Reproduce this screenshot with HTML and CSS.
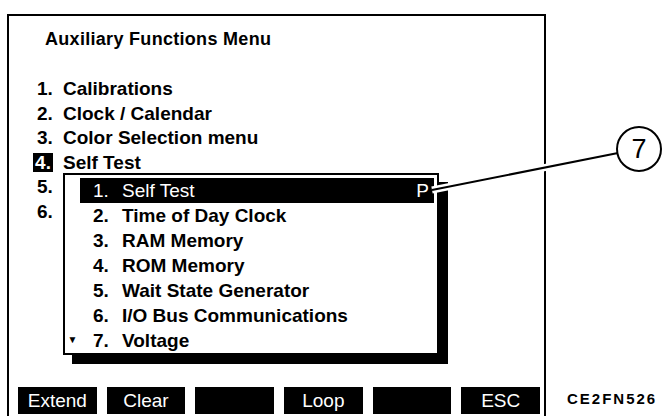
FILE: index.html
```html
<!DOCTYPE html>
<html lang="en">
<head>
    <meta charset="UTF-8">
    <meta name="viewport" content="width=device-width, initial-scale=1.0">
    <title>Auxiliary Functions Menu</title>
    <link rel="stylesheet" href="styles.css">
</head>
<body>
<div class="page">

    <!-- Tela do instrumento -->
    <div class="screen">
        <h1 class="title">Auxiliary Functions Menu</h1>

        <div class="menu">
            <div class="row"><span class="num">1.</span><span>Calibrations</span></div>
            <div class="row"><span class="num">2.</span><span>Clock / Calendar</span></div>
            <div class="row"><span class="num">3.</span><span>Color Selection menu</span></div>
            <div class="row"><span class="num sel">4.</span><span>Self Test</span></div>
            <div class="row"><span class="num">5.</span></div>
            <div class="row"><span class="num">6.</span></div>
        </div>

        <!-- Submenu Self Test -->
        <div class="popup">
            <div class="prow"><span class="gut"></span><span class="cell active"><span class="pnum">1.</span><span>Self Test</span><span class="flag">P</span></span></div>
            <div class="prow"><span class="gut"></span><span class="cell"><span class="pnum">2.</span><span>Time of Day Clock</span></span></div>
            <div class="prow"><span class="gut"></span><span class="cell"><span class="pnum">3.</span><span>RAM Memory</span></span></div>
            <div class="prow"><span class="gut"></span><span class="cell"><span class="pnum">4.</span><span>ROM Memory</span></span></div>
            <div class="prow"><span class="gut"></span><span class="cell"><span class="pnum">5.</span><span>Wait State Generator</span></span></div>
            <div class="prow"><span class="gut"></span><span class="cell"><span class="pnum">6.</span><span>I/O Bus Communications</span></span></div>
            <div class="prow"><span class="gut">&#9660;</span><span class="cell"><span class="pnum">7.</span><span>Voltage</span></span></div>
        </div>

        <!-- Teclas de função -->
        <div class="softkeys">
            <div class="key">Extend</div>
            <div class="key">Clear</div>
            <div class="key"></div>
            <div class="key">Loop</div>
            <div class="key"></div>
            <div class="key">ESC</div>
        </div>
    </div>

    <div class="figid">CE2FN526</div>

    <!-- Chamada 7 -->
    <svg class="callout" width="662" height="416" viewBox="0 0 662 416">
        <line x1="432" y1="190" x2="618" y2="153" stroke="#fff" stroke-width="7"/>
        <line x1="432" y1="190" x2="618" y2="153" stroke="#000" stroke-width="2"/>
        <circle cx="639" cy="149" r="22" fill="#fff" stroke="#000" stroke-width="2"/>
        <text x="639" y="158" text-anchor="middle" class="callnum">7</text>
    </svg>
</div>
</body>
</html>
```

FILE: styles.css
```css
/* Página */
body {
    margin: 0;
    background-color: #fff;
    font-family: "Liberation Sans", Arial, sans-serif;
    color: #000;
    overflow: hidden;
}

.page {
    position: relative;
    width: 662px;
    height: 416px;
    display: flex;
    align-items: flex-start;
    padding: 14px 0 0 7px;
    box-sizing: border-box;
}

/* Moldura da tela */
.screen {
    position: relative;
    width: 539px;
    height: 402px;
    border: 2px solid #000;
    border-bottom: none;
    box-sizing: border-box;
    display: flex;
    flex-direction: column;
}

.title {
    margin: 13px 0 0 36px;
    font-size: 18px;
    line-height: 20px;
    font-weight: bold;
    letter-spacing: 0.3px;
}

/* Menu principal */
.menu {
    margin: 28px 0 0 28px;
    font-size: 19px;
    font-weight: bold;
}

.row {
    display: flex;
    align-items: center;
    height: 24.5px;
}

.num {
    width: 26px;
}

.num.sel {
    width: 20px;
    height: 19px;
    line-height: 19px;
    margin: 0 10px 0 -4px;
    background-color: #000;
    color: #fff;
    text-align: center;
}

/* Submenu */
.popup {
    position: absolute;
    left: 54px;
    top: 157px;
    width: 372px;
    padding-top: 3px;
    border: 2px solid #000;
    background-color: #fff;
    box-shadow: 9px 9px 0 #000;
    font-size: 19px;
    font-weight: bold;
}

.prow {
    display: flex;
    height: 25px;
}

.gut {
    width: 15px;
    font-size: 10px;
    line-height: 23px;
    text-align: center;
}

.cell {
    flex: 1;
    display: flex;
    align-items: center;
    margin-right: 3px;
    padding: 0 5px 0 13px;
}

.pnum {
    width: 29px;
}

.cell.active {
    background-color: #000;
    color: #fff;
    font-weight: normal;
}

.flag {
    margin-left: auto;
}

/* Teclas */
.softkeys {
    margin-top: auto;
    margin-bottom: 2px;
    display: flex;
    gap: 10px;
    padding: 0 4px 0 9px;
}

.key {
    flex: 1;
    height: 27px;
    line-height: 27px;
    background-color: #000;
    color: #fff;
    font-size: 19px;
    text-align: center;
}

.figid {
    margin: 376px 0 0 21px;
    font-size: 15px;
    font-weight: bold;
    letter-spacing: 2px;
    line-height: 17px;
}

.callout {
    position: absolute;
    left: 0;
    top: 0;
    pointer-events: none;
}

.callnum {
    font-family: "Liberation Sans", Arial, sans-serif;
    font-size: 27px;
}
```
